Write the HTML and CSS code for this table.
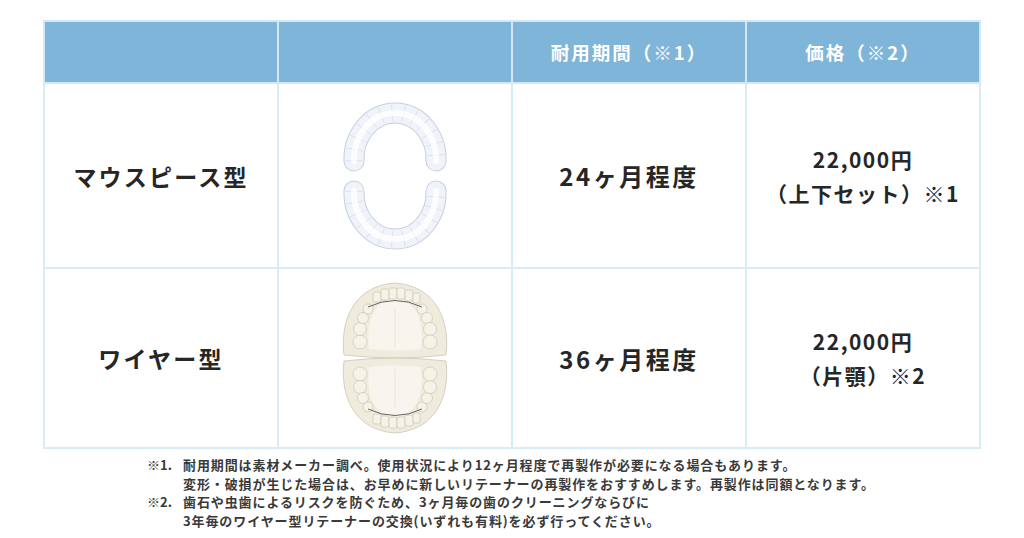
FILE: index.html
```html
<!DOCTYPE html>
<html lang="ja">
<head>
<meta charset="utf-8">
<title>リテーナー比較</title>
<link rel="stylesheet" href="styles.css">
</head>
<body>
<div class="page">
  <table class="compare">
    <thead>
      <tr>
        <th></th>
        <th></th>
        <th>耐用期間（※1）</th>
        <th>価格（※2）</th>
      </tr>
    </thead>
    <tbody>
      <tr class="row-a">
        <td class="type">マウスピース型</td>
        <td class="pic">
          <svg class="illus" viewBox="0 0 110 150" width="110" height="150" aria-hidden="true">
            <defs>
              <path id="arch" d="M14,60 C13,36 30,12 55,12 C80,12 97,36 96,60"/>
              <g id="aligner" fill="none">
                <use href="#arch" stroke="#c6cee0" stroke-width="21" stroke-linecap="round"/>
                <use href="#arch" stroke="#f0f3fa" stroke-width="19" stroke-linecap="round"/>
                <use href="#arch" stroke="#d6dcea" stroke-width="17" stroke-dasharray="0.7 10.5"/>
                <use href="#arch" stroke="#ffffff" stroke-width="6" opacity="0.8" stroke-linecap="round"/>
              </g>
            </defs>
            <use href="#aligner"/>
            <use href="#aligner" transform="translate(0,150) scale(1,-1)"/>
          </svg>
        </td>
        <td class="term">24ヶ月程度</td>
        <td class="price">22,000円<br>（上下セット）※1</td>
      </tr>
      <tr class="row-b">
        <td class="type">ワイヤー型</td>
        <td class="pic">
          <svg class="illus" viewBox="0 0 110 154" width="110" height="154" aria-hidden="true">
            <defs>
              <g id="plate">
                <path d="M4,74 C0,42 12,5 55,2 C98,5 110,42 106,74 Q55,80 4,74 Z" fill="#efebdd" stroke="#cdc7b3" stroke-width="0.8"/>
                <path d="M29,68 C26,42 32,20 55,18 C78,20 84,42 81,68 Q55,71 29,68 Z" fill="#f7f5ed"/>
                <g fill="#f5f2e8" stroke="#c2bca8" stroke-width="0.55">
                  <circle cx="20" cy="61" r="7"/>
                  <circle cx="20" cy="48" r="6.5"/>
                  <circle cx="23" cy="37" r="5.5"/>
                  <circle cx="28" cy="28" r="5"/>
                  <rect x="33" y="11" width="8" height="10" rx="2"/>
                  <rect x="41" y="8" width="8" height="11" rx="2"/>
                  <rect x="49" y="7" width="8" height="11" rx="2"/>
                  <rect x="57" y="7" width="8" height="11" rx="2"/>
                  <rect x="65" y="9" width="8" height="11" rx="2"/>
                  <rect x="73" y="12" width="7" height="10" rx="2"/>
                  <circle cx="82" cy="28" r="5"/>
                  <circle cx="87" cy="37" r="5.5"/>
                  <circle cx="90" cy="48" r="6.5"/>
                  <circle cx="90" cy="61" r="7"/>
                </g>
                <path d="M28,26 Q55,13 82,26" fill="none" stroke="#555555" stroke-width="0.9"/>
                <path d="M55,28 L55,66" fill="none" stroke="#e0dbcc" stroke-width="0.6"/>
              </g>
            </defs>
            <use href="#plate"/>
            <use href="#plate" transform="translate(0,154) scale(1,-1)"/>
          </svg>
        </td>
        <td class="term">36ヶ月程度</td>
        <td class="price">22,000円<br>（片顎）※2</td>
      </tr>
    </tbody>
  </table>

  <ul class="notes">
    <li><span class="mark">※1.</span><span class="body">耐用期間は素材メーカー調べ。使用状況により12ヶ月程度で再製作が必要になる場合もあります。<br>変形・破損が生じた場合は、お早めに新しいリテーナーの再製作をおすすめします。再製作は同額となります。</span></li>
    <li><span class="mark">※2.</span><span class="body">歯石や虫歯によるリスクを防ぐため、3ヶ月毎の歯のクリーニングならびに<br>3年毎のワイヤー型リテーナーの交換(いずれも有料)を必ず行ってください。</span></li>
  </ul>
</div>
</body>
</html>
```

FILE: styles.css
```css
html, body {
  margin: 0;
  padding: 0;
  background: #ffffff;
}

body {
  font-family: "Noto Sans CJK JP", "Noto Sans", sans-serif;
  color: #262626;
}

.page {
  padding: 20px 43px 0;
}

.compare {
  width: 938px;
  border-collapse: collapse;
  table-layout: fixed;
}

.compare th,
.compare td {
  border: 2px solid #d8ecf8;
  text-align: center;
  vertical-align: middle;
  padding: 0;
}

.compare th {
  background: #7fb5d8;
  color: #ffffff;
  height: 60px;
  font-size: 18.5px;
  font-weight: 700;
  letter-spacing: 2px;
  border-color: #d2e8f5;
}

.row-a td {
  height: 183px;
}

.row-b td {
  height: 178px;
}

.type {
  font-size: 23px;
  font-weight: 700;
  letter-spacing: 2.2px;
}

.term {
  font-size: 24px;
  font-weight: 700;
  letter-spacing: 2.5px;
}

.price {
  font-size: 21px;
  font-weight: 700;
  line-height: 34px;
  letter-spacing: 1.5px;
}

.illus {
  display: block;
  margin: 0 auto;
}

.notes {
  list-style: none;
  margin: 7px 0 0 104px;
  padding: 0;
  font-size: 13px;
  line-height: 18.5px;
  font-weight: 700;
  letter-spacing: 0.9px;
  color: #3a3a3a;
}

.notes li {
  display: flex;
}

.mark {
  width: 36px;
  flex: none;
  letter-spacing: 0;
}

.body {
  white-space: nowrap;
}
```
